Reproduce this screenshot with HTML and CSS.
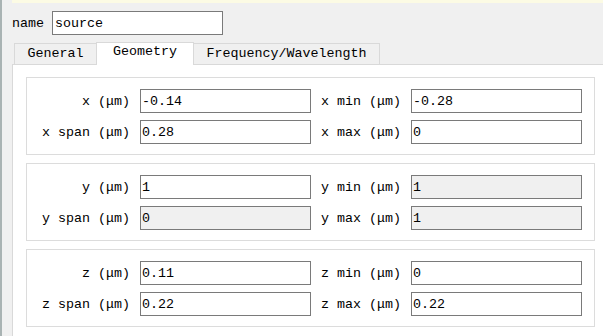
FILE: index.html
```html
<!DOCTYPE html>
<html lang="en">
<head>
  <meta charset="UTF-8">
  <meta name="viewport" content="width=device-width, initial-scale=1.0">
  <title>source</title>
  <link rel="stylesheet" href="styles.css">
</head>
<body>
  <div class="app">
    <div class="notice"></div>

    <div class="name-row">
      <label for="name">name</label>
      <input type="text" id="name" class="field name-field" value="source">
    </div>

    <div class="tabs">
      <div class="tab tab-general">General</div>
      <div class="tab tab-geometry active">Geometry</div>
      <div class="tab tab-freq">Frequency/Wavelength</div>
    </div>

    <div class="panel">
      <!-- x -->
      <div class="group">
        <label>x (μm)</label>
        <input type="text" class="field" value="-0.14">
        <label>x min (μm)</label>
        <input type="text" class="field" value="-0.28">
        <label>x span (μm)</label>
        <input type="text" class="field" value="0.28">
        <label>x max (μm)</label>
        <input type="text" class="field" value="0">
      </div>

      <!-- y -->
      <div class="group">
        <label>y (μm)</label>
        <input type="text" class="field" value="1">
        <label>y min (μm)</label>
        <input type="text" class="field locked" value="1" readonly>
        <label>y span (μm)</label>
        <input type="text" class="field locked" value="0" readonly>
        <label>y max (μm)</label>
        <input type="text" class="field locked" value="1" readonly>
      </div>

      <!-- z -->
      <div class="group">
        <label>z (μm)</label>
        <input type="text" class="field" value="0.11">
        <label>z min (μm)</label>
        <input type="text" class="field" value="0">
        <label>z span (μm)</label>
        <input type="text" class="field" value="0.22">
        <label>z max (μm)</label>
        <input type="text" class="field" value="0.22">
      </div>
    </div>
  </div>
</body>
</html>
```

FILE: styles.css
```css
/* Global styles */
body {
  margin: 0;
  background-color: #f0f0f0;
  font-family: 'Liberation Mono', 'DejaVu Sans Mono', monospace;
  font-size: 13.33px;
  color: #000;
  overflow: hidden;
}

.app {
  min-height: 336px;
  border-left: 2px solid #a9b3b3;
}

.notice {
  height: 3px;
  margin-left: 10px;
  background-color: #fcfbe4;
}

/* Name row */
.name-row {
  display: flex;
  align-items: center;
  gap: 8px;
  margin-top: 8px;
  padding-left: 10px;
}

.field {
  box-sizing: border-box;
  width: 171px;
  height: 24px;
  padding: 0 1px;
  border: 1px solid #7a7a7a;
  border-radius: 0;
  background-color: #fff;
  font-family: inherit;
  font-size: 13.33px;
  color: #000;
  outline: none;
}

.name-field {
  padding-left: 2px;
}

.field.locked {
  background-color: #f0f0f0;
}

/* Tabs */
.tabs {
  display: flex;
  align-items: flex-end;
  margin-top: 7px;
  padding-left: 12px;
  height: 22px;
}

.tab {
  box-sizing: border-box;
  height: 21px;
  margin-right: -1px;
  border: 1px solid #d9d9d9;
  border-bottom: none;
  background-color: #f0f0f0;
  text-align: center;
  line-height: 19px;
}

.tab-general {
  width: 83px;
}

.tab-geometry {
  width: 98px;
}

.tab-freq {
  width: 187px;
}

.tab.active {
  position: relative;
  z-index: 1;
  height: 23px;
  margin-bottom: -1px;
  background-color: #fff;
  line-height: 18px;
}

/* Panel */
.panel {
  min-height: 272px;
  margin-left: 10px;
  padding: 12px 0 0 13px;
  border-top: 1px solid #d9d9d9;
  border-left: 1px solid #d9d9d9;
  background-color: #fff;
}

.group {
  box-sizing: border-box;
  width: 569px;
  margin-bottom: 8px;
  padding: 11px 0 10px 0;
  border: 1px solid #dcdcdc;
  display: grid;
  grid-template-columns: 103px 171px 80px 171px;
  column-gap: 10px;
  row-gap: 7px;
  align-items: center;
}

.group label {
  text-align: right;
  white-space: nowrap;
}

.group label:nth-of-type(even) {
  padding-right: 2px;
}
```
